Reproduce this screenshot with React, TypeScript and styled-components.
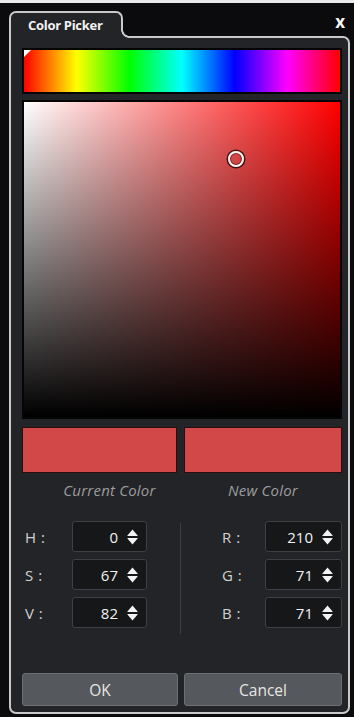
import styled, { createGlobalStyle } from "styled-components";

const PANEL = "#222428";
const EDGE = "#c9c9c9";
const SWATCH = "rgb(210, 71, 71)";

const GlobalStyle = createGlobalStyle`
  * { box-sizing: border-box; }
  html, body {
    margin: 0;
    background: #0b0b0d;
    font-family: "Open Sans", "Noto Sans", sans-serif;
  }
`;

const Page = styled.div`
  min-height: 100vh;
  border-top: 3px solid #e9e9e9;
  padding: 8px 4px 3px 9px;
  display: flex;
  flex-direction: column;
`;

const Header = styled.div`
  display: flex;
  align-items: flex-start;
  height: 25px;
`;

const Tab = styled.div`
  position: relative;
  z-index: 1;
  width: 114px;
  height: 27px;
  margin-bottom: -2px;
  padding: 3px 0 0 17px;
  background: ${PANEL};
  border: 2px solid ${EDGE};
  border-bottom: 0;
  border-radius: 7px 7px 0 0;
  color: #f2f2f2;
  font-size: 13px;
  font-weight: 700;
  letter-spacing: -0.3px;

  /* fillet where the tab runs into the panel edge */
  &::after {
    content: "";
    position: absolute;
    left: 100%;
    bottom: 0;
    width: 8px;
    height: 8px;
    background: radial-gradient(
      circle at 100% 0,
      transparent 5.5px,
      ${EDGE} 6px,
      ${EDGE} 7.5px,
      ${PANEL} 8px
    );
  }
`;

const Close = styled.div`
  margin-left: auto;
  margin-right: 5px;
  margin-top: 2px;
  color: #f4f4f4;
  font-size: 17px;
  font-weight: 700;
  line-height: 1;
`;

const Panel = styled.div`
  flex: 1;
  display: flex;
  flex-direction: column;
  background: ${PANEL};
  border: 2px solid ${EDGE};
  border-radius: 0 7px 7px 7px;
  padding: 10px 6px 6px 11px;
`;

const HueBar = styled.div`
  position: relative;
  height: 46px;
  border: 2px solid #050505;
  background: linear-gradient(
    to right,
    #ff0000 0%,
    #ffff00 16.7%,
    #00ff00 33.3%,
    #00ffff 50%,
    #0000ff 66.7%,
    #ff00ff 83.3%,
    #ff0000 100%
  );

  &::before {
    content: "";
    position: absolute;
    left: 0;
    top: 0;
    border-top: 7px solid #ffffff;
    border-right: 7px solid transparent;
  }
`;

const SVField = styled.div`
  position: relative;
  height: 319px;
  margin-top: 6px;
  border: 2px solid #050505;
  background: linear-gradient(to top, #000 0%, rgba(0, 0, 0, 0) 100%),
    linear-gradient(to right, #ffffff 0%, #ff0000 100%);
`;

const Marker = styled.div`
  position: absolute;
  width: 16px;
  height: 16px;
  margin: -8px 0 0 -8px;
  border-radius: 50%;
  border: 2px solid #f4f4f4;
  box-shadow: 0 0 0 1.5px rgba(40, 10, 10, 0.85),
    inset 0 0 0 1px rgba(60, 10, 10, 0.6);
`;

const Pair = styled.div<{ $top: number }>`
  display: grid;
  grid-template-columns: 155px 158px;
  column-gap: 7px;
  margin-top: ${(p) => p.$top}px;
`;

const Swatch = styled.div<{ $color: string }>`
  height: 46px;
  background: ${(p) => p.$color};
  border: 1px solid #2b0c0c;
`;

const Caption = styled.div<{ $shift?: number }>`
  text-align: center;
  padding-left: ${(p) => p.$shift ?? 0}px;
  color: #9d9d9d;
  font-size: 15px;
  font-style: italic;
  line-height: 18px;
  letter-spacing: 0.2px;
`;

const Fields = styled.div`
  display: grid;
  grid-template-columns: 158px 1px 1fr;
  margin-top: 22px;
`;

const Divider = styled.div`
  background: #3c3f43;
  margin: 2px 0 -6px;
`;

const Column = styled.div<{ $indent: number }>`
  display: flex;
  flex-direction: column;
  gap: 7px;
  padding-left: ${(p) => p.$indent}px;
`;

const Row = styled.div`
  display: flex;
  align-items: center;
  height: 31px;
`;

const Label = styled.div<{ $width: number }>`
  width: ${(p) => p.$width}px;
  color: #d2d2d2;
  font-size: 15px;
  letter-spacing: 0.5px;
`;

const SpinBox = styled.div<{ $width: number }>`
  width: ${(p) => p.$width}px;
  height: 31px;
  display: flex;
  align-items: center;
  justify-content: flex-end;
  gap: 9px;
  padding-right: 8px;
  background: #151719;
  border: 1px solid #3d4044;
  border-radius: 3px;
  color: #f2f2f2;
  font-size: 15px;
`;

const Buttons = styled.div`
  display: grid;
  grid-template-columns: 156px 158px;
  column-gap: 6px;
  margin-top: auto;
`;

const Button = styled.button`
  height: 33px;
  background: #55585c;
  border: 1px solid #6c6f73;
  border-radius: 3px;
  color: #e6e6e6;
  font-family: "Open Sans", "Noto Sans", sans-serif;
  font-size: 15.5px;
  padding: 0;
`;

const Spinner = () => (
  <svg width="11" height="16" viewBox="0 0 11 16">
    <path d="M5.5 0.5 L10.6 6.6 Q11 7 10.4 7 H0.6 Q0 7 0.4 6.6 Z" fill="#f2f2f2" />
    <path d="M0.6 9 H10.4 Q11 9 10.6 9.4 L5.5 15.5 L0.4 9.4 Q0 9 0.6 9 Z" fill="#f2f2f2" />
  </svg>
);

type Field = { name: string; value: number };

const hsv: Field[] = [
  { name: "H", value: 0 },
  { name: "S", value: 67 },
  { name: "V", value: 82 },
];

const rgb: Field[] = [
  { name: "R", value: 210 },
  { name: "G", value: 71 },
  { name: "B", value: 71 },
];

const FieldRows = ({ items, labelWidth, boxWidth }: { items: Field[]; labelWidth: number; boxWidth: number }) => (
  <>
    {items.map((f) => (
      <Row key={f.name}>
        <Label $width={labelWidth}>{f.name} :</Label>
        <SpinBox $width={boxWidth}>
          <span>{f.value}</span>
          <Spinner />
        </SpinBox>
      </Row>
    ))}
  </>
);

export default function App() {
  const s = 67;
  const v = 82;
  return (
    <>
      <GlobalStyle />
      <Page>
        <Header>
          <Tab>Color Picker</Tab>
          <Close>x</Close>
        </Header>
        <Panel>
          <HueBar />
          <SVField>
            <Marker style={{ left: `${s}%`, top: `${100 - v}%` }} />
          </SVField>
          <Pair $top={8}>
            <Swatch $color={SWATCH} />
            <Swatch $color={SWATCH} />
          </Pair>
          <Pair $top={8}>
            <Caption $shift={20}>Current Color</Caption>
            <Caption>New Color</Caption>
          </Pair>
          <Fields>
            <Column $indent={3}>
              <FieldRows items={hsv} labelWidth={47} boxWidth={75} />
            </Column>
            <Divider />
            <Column $indent={41}>
              <FieldRows items={rgb} labelWidth={43} boxWidth={77} />
            </Column>
          </Fields>
          <Buttons>
            <Button>OK</Button>
            <Button>Cancel</Button>
          </Buttons>
        </Panel>
      </Page>
    </>
  );
}
